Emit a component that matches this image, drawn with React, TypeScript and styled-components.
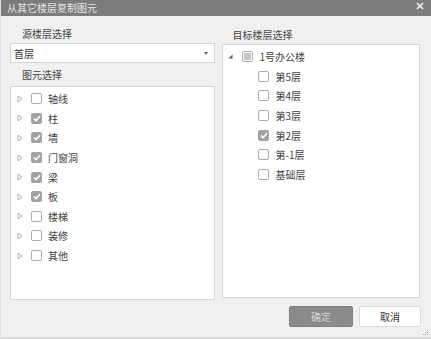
import React from "react";
import styled, { createGlobalStyle } from "styled-components";

const GlobalStyle = createGlobalStyle`
  * { box-sizing: border-box; }
  html, body { margin: 0; padding: 0; background: #f0f0f0; }
  body { font-family: "Noto Sans CJK SC", "Noto Sans", sans-serif; }
`;

const Dialog = styled.div`
  position: relative;
  width: 431px;
  height: 339px;
  display: flex;
  flex-direction: column;
  background: #f0f0f0;
  border-left: 1px solid #e2e2e2;
  border-bottom: 2px solid #dcdcdc;
  overflow: hidden;
`;

const TitleBar = styled.div`
  height: 16px;
  flex: none;
  display: flex;
  align-items: center;
  justify-content: space-between;
  padding: 0 6px 0 6px;
  background: #7c7c7c;
  color: #e4e4e4;
  font-size: 10px;
  line-height: 16px;
`;

const CloseBtn = styled.span`
  width: 10px;
  height: 10px;
  display: flex;
  align-items: center;
  justify-content: center;
  margin-top: -4px;
`;

const Main = styled.div`
  height: 284px;
  display: flex;
  gap: 7px;
  padding: 9px 11px 0 9px;
`;

const Column = styled.div<{ $w: number }>`
  width: ${(p) => p.$w}px;
  display: flex;
  flex-direction: column;
`;

const Label = styled.div<{ $h: number; $indent: number }>`
  height: ${(p) => p.$h}px;
  line-height: ${(p) => p.$h}px;
  padding-left: ${(p) => p.$indent}px;
  font-size: 10px;
  color: #454545;
  white-space: nowrap;
`;

const Select = styled.div`
  height: 20px;
  display: flex;
  align-items: center;
  justify-content: space-between;
  padding: 0 6px 0 3px;
  background: #fff;
  border: 1px solid #d4d4d4;
  font-size: 10px;
  color: #333;
`;

const Caret = styled.span`
  width: 0;
  height: 0;
  border-left: 2.5px solid transparent;
  border-right: 2.5px solid transparent;
  border-top: 3px solid #666;
`;

const Box = styled.div<{ $h: number }>`
  height: ${(p) => p.$h}px;
  background: #fff;
  border: 1px solid #d6d6d6;
  padding-top: 2px;
`;

const Row = styled.div<{ $pad: number }>`
  height: 19.6px;
  display: flex;
  align-items: center;
  padding-left: ${(p) => p.$pad}px;
  font-size: 10px;
  color: #404040;
  white-space: nowrap;
`;

const ToggleSlot = styled.span`
  width: 14px;
  flex: none;
  display: flex;
  align-items: center;
`;

const CheckBox = styled.span<{ $checked?: boolean }>`
  width: 11px;
  height: 11px;
  flex: none;
  border-radius: 2px;
  border: 1px solid ${(p) => (p.$checked ? "#a3a3a3" : "#ababab")};
  background: ${(p) => (p.$checked ? "#a3a3a3" : "#fff")};
  display: flex;
  align-items: center;
  justify-content: center;
  margin-right: 6px;
`;

const PartialFill = styled.span`
  width: 7px;
  height: 7px;
  border-radius: 1px;
  background: #c4c4c4;
`;

const Footer = styled.div`
  display: flex;
  justify-content: flex-end;
  gap: 6px;
  padding: 6px 10px 0 0;
`;

const Button = styled.button<{ $primary?: boolean; $w: number }>`
  width: ${(p) => p.$w}px;
  height: 21px;
  padding: 0;
  border-radius: 2px;
  font-family: inherit;
  font-size: 10px;
  border: 1px solid ${(p) => (p.$primary ? "#808080" : "#dadada")};
  background: ${(p) => (p.$primary ? "#8b8b8b" : "#ffffff")};
  color: ${(p) => (p.$primary ? "#d6d6d6" : "#333")};
`;

const Grip = styled.svg`
  position: absolute;
  right: 2px;
  bottom: 1px;
`;

const OutlineArrow = () => (
  <svg width="6" height="8" viewBox="0 0 6 8">
    <path d="M1 1 L5 4 L1 7 Z" fill="none" stroke="#b0b0b0" strokeWidth="1" />
  </svg>
);

const ExpandedArrow = () => (
  <svg width="5" height="5" viewBox="0 0 5 5">
    <path d="M4.5 0.5 L4.5 4.5 L0.5 4.5 Z" fill="#555" />
  </svg>
);

const Check = () => (
  <svg width="8" height="7" viewBox="0 0 8 7">
    <path d="M1 3.6 L3.1 5.6 L7 1.2" fill="none" stroke="#fff" strokeWidth="1.5" />
  </svg>
);

const leftItems: { name: string; checked: boolean }[] = [
  { name: "轴线", checked: false },
  { name: "柱", checked: true },
  { name: "墙", checked: true },
  { name: "门窗洞", checked: true },
  { name: "梁", checked: true },
  { name: "板", checked: true },
  { name: "楼梯", checked: false },
  { name: "装修", checked: false },
  { name: "其他", checked: false },
];

const floors: { name: string; checked: boolean }[] = [
  { name: "第5层", checked: false },
  { name: "第4层", checked: false },
  { name: "第3层", checked: false },
  { name: "第2层", checked: true },
  { name: "第-1层", checked: false },
  { name: "基础层", checked: false },
];

export default function App() {
  return (
    <>
      <GlobalStyle />
      <Dialog>
        <TitleBar>
          <span>从其它楼层复制图元</span>
          <CloseBtn>
            <svg width="8" height="8" viewBox="0 0 8 8">
              <path d="M1 1 L7 7 M7 1 L1 7" stroke="#f4f4f4" strokeWidth="1.6" />
            </svg>
          </CloseBtn>
        </TitleBar>
        <Main>
          <Column $w={206}>
            <Label $h={18} $indent={12}>源楼层选择</Label>
            <Select>
              <span>首层</span>
              <Caret />
            </Select>
            <Label $h={23} $indent={12}>图元选择</Label>
            <Box $h={214}>
              {leftItems.map((it) => (
                <Row key={it.name} $pad={6}>
                  <ToggleSlot>
                    <OutlineArrow />
                  </ToggleSlot>
                  <CheckBox $checked={it.checked}>{it.checked && <Check />}</CheckBox>
                  <span>{it.name}</span>
                </Row>
              ))}
            </Box>
          </Column>
          <Column $w={198}>
            <Label $h={19} $indent={10}>目标楼层选择</Label>
            <Box $h={254}>
              <Row $pad={5}>
                <ToggleSlot>
                  <ExpandedArrow />
                </ToggleSlot>
                <CheckBox>
                  <PartialFill />
                </CheckBox>
                <span>1号办公楼</span>
              </Row>
              {floors.map((f) => (
                <Row key={f.name} $pad={21}>
                  <ToggleSlot />
                  <CheckBox $checked={f.checked}>{f.checked && <Check />}</CheckBox>
                  <span>{f.name}</span>
                </Row>
              ))}
            </Box>
          </Column>
        </Main>
        <Footer>
          <Button $primary $w={64}>确定</Button>
          <Button $w={62}>取消</Button>
        </Footer>
        <Grip width="6" height="6" viewBox="0 0 6 6">
          <rect x="4" y="0" width="1" height="1" fill="#9a9a9a" />
          <rect x="2" y="2" width="1" height="1" fill="#9a9a9a" />
          <rect x="4" y="2" width="1" height="1" fill="#9a9a9a" />
          <rect x="0" y="4" width="1" height="1" fill="#9a9a9a" />
          <rect x="2" y="4" width="1" height="1" fill="#9a9a9a" />
          <rect x="4" y="4" width="1" height="1" fill="#9a9a9a" />
        </Grip>
      </Dialog>
    </>
  );
}
